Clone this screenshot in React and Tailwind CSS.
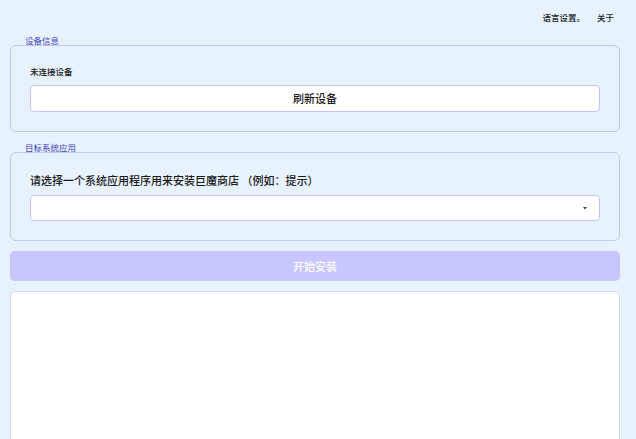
export default function App() {
  return (
    <div
      className="h-[439px] overflow-hidden bg-[#e8f2fc] text-[#1a1a1a]"
      style={{ fontFamily: '"Noto Sans CJK SC", "Noto Sans", sans-serif' }}
    >
      {/* header links */}
      <div className="flex justify-end gap-[12px] pr-[22px] pt-[12px] text-[8.5px] leading-[10px] h-[35px] font-medium">
        <span>语言设置。</span>
        <span>关于</span>
      </div>

      <div className="ml-[10px] mr-[16px]">
        {/* device info */}
        <div className="pl-[15px] text-[8.5px] leading-[10px] text-[#4347b9] h-[10px]">设备信息</div>
        <div className="rounded-[6px] border border-[#c2c4fa] px-[19px] pt-[19px] pb-[19px]">
          <div className="text-[8.5px] leading-[12px] font-medium">未连接设备</div>
          <button className="mt-[8px] flex h-[27px] w-full items-center justify-center rounded-[4px] border border-[#c2c4fa] bg-white text-[11px] font-medium">
            刷新设备
          </button>
        </div>

        {/* target app */}
        <div className="mt-[10px] pl-[15px] text-[8.5px] leading-[10px] text-[#4347b9] h-[10px]">目标系统应用</div>
        <div className="rounded-[6px] border border-[#c2c4fa] px-[19px] pt-[19px] pb-[19px]">
          <div className="text-[11px] leading-[16px] font-medium">请选择一个系统应用程序用来安装巨魔商店 （例如：提示）</div>
          <div className="mt-[7px] flex h-[26px] items-center justify-end rounded-[4px] border border-[#c2c4fa] bg-white pr-[12px]">
            <svg width="4" height="4" viewBox="0 0 4 4">
              <path d="M0 1h4L2 3.5z" fill="#444" />
            </svg>
          </div>
        </div>

        {/* install */}
        <button className="mt-[10px] flex h-[30px] w-full items-center justify-center rounded-[5px] bg-[#c7c6fd] text-[11px] font-medium text-white">
          开始安装
        </button>

        {/* log area */}
        <div className="mt-[10px] h-[200px] rounded-[5px] border border-[#d6d7f6] bg-white" />
      </div>
    </div>
  );
}
